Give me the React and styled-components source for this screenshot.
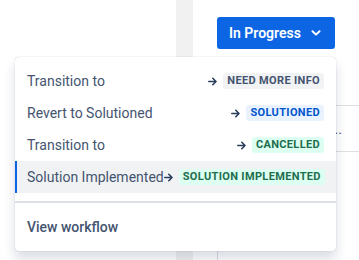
import React from "react";
import styled, { createGlobalStyle } from "styled-components";

const Global = createGlobalStyle`
  html, body { margin: 0; padding: 0; background: #ffffff; }
  body { font-family: Roboto, "Noto Sans", "Liberation Sans", sans-serif; -webkit-font-smoothing: antialiased; }
  * { box-sizing: border-box; }
`;

const Page = styled.div`
  position: relative;
  width: 359px;
  height: 260px;
  overflow: hidden;
  display: flex;
  background: #ffffff;
`;

const LeftPanel = styled.div`
  width: 176px;
  flex: none;
`;

const Gutter = styled.div`
  width: 17px;
  flex: none;
  background: #f1f1f1;
`;

const RightPanel = styled.div`
  flex: 1;
  display: flex;
  flex-direction: column;
  padding-top: 17px;
`;

const ButtonRow = styled.div`
  display: flex;
  padding-left: 24px;
  height: 32px;
`;

const StatusButton = styled.button`
  display: flex;
  align-items: center;
  justify-content: space-between;
  width: 118px;
  height: 32px;
  padding: 0 14px 0 12px;
  border: none;
  border-radius: 3px;
  background: #0c66e4;
  color: #ffffff;
  font-family: inherit;
  font-size: 14px;
  font-weight: 600;
  cursor: pointer;
`;

const InfoList = styled.div`
  margin-top: 56px;
  display: flex;
  flex-direction: column;
`;

const InfoRow = styled.div`
  height: 47px;
  border-top: 1px solid #dcdfe4;
  display: flex;
  align-items: center;
  justify-content: flex-end;
  padding-right: 17px;
  color: #44546f;
  font-size: 14px;
  &:last-child { border-bottom: 1px solid #dcdfe4; }
`;

const BottomStrip = styled.div`
  margin-top: auto;
  height: 10px;
  margin-left: 24px;
  border-left: 1px solid #dcdfe4;
`;

const Menu = styled.div`
  position: absolute;
  left: 15px;
  top: 57px;
  width: 321px;
  background: #ffffff;
  border-radius: 4px;
  box-shadow: 0 8px 12px rgba(9, 30, 66, 0.15), 0 0 1px rgba(9, 30, 66, 0.31);
  display: flex;
  flex-direction: column;
`;

const Section = styled.div`
  padding: 8px 0;
  & + & { border-top: 2px solid #dcdfe4; }
`;

const Item = styled.div`
  height: 32px;
  display: flex;
  align-items: center;
  justify-content: space-between;
  padding: 0 12px;
  color: #44546f;
  font-size: 14px;
  font-weight: ${(p) => (p.$bold ? 500 : 400)};
  background: ${(p) => (p.$active ? "#f1f2f4" : "transparent")};
  box-shadow: ${(p) => (p.$active ? "inset 2px 0 0 #0c66e4" : "none")};
  white-space: nowrap;
`;

const Target = styled.span`
  display: flex;
  align-items: center;
  gap: 6px;
`;

const tones = {
  neutral: { bg: "#f1f2f4", fg: "#44546f" },
  blue: { bg: "#e9f2ff", fg: "#0055cc" },
  green: { bg: "#dcfff1", fg: "#216e4e" },
};

const Lozenge = styled.span`
  display: inline-block;
  padding: 0 4px;
  height: 16px;
  line-height: 16px;
  border-radius: 3px;
  font-size: 11px;
  font-weight: 700;
  letter-spacing: 0.35px;
  text-transform: uppercase;
  background: ${(p) => tones[p.$tone].bg};
  color: ${(p) => tones[p.$tone].fg};
`;

const Arrow = () => (
  <svg width="9" height="9" viewBox="0 0 9 9" fill="none">
    <path d="M0.8 4.5H8M4.8 1.3L8 4.5L4.8 7.7" stroke="#2c3e5d" strokeWidth="1.6" strokeLinecap="round" strokeLinejoin="round" />
  </svg>
);

const Chevron = () => (
  <svg width="10" height="6" viewBox="0 0 10 6" fill="none">
    <path d="M1.5 1.2L5 4.6L8.5 1.2" stroke="#ffffff" strokeWidth="2" strokeLinecap="round" strokeLinejoin="round" />
  </svg>
);

const transitions = [
  { label: "Transition to", to: "Need more info", tone: "neutral" },
  { label: "Revert to Solutioned", to: "Solutioned", tone: "blue" },
  { label: "Transition to", to: "Cancelled", tone: "green" },
  { label: "Solution Implemented", to: "Solution implemented", tone: "green", active: true },
];

export default function App() {
  return (
    <>
      <Global />
      <Page>
        <LeftPanel />
        <Gutter />
        <RightPanel>
          <ButtonRow>
            <StatusButton>
              In Progress
              <Chevron />
            </StatusButton>
          </ButtonRow>
          <InfoList>
            <InfoRow>...</InfoRow>
          </InfoList>
          <BottomStrip />
        </RightPanel>
        <Menu>
          <Section>
            {transitions.map((t, i) => (
              <Item key={i} $active={t.active}>
                <span>{t.label}</span>
                <Target>
                  <Arrow />
                  <Lozenge $tone={t.tone}>{t.to}</Lozenge>
                </Target>
              </Item>
            ))}
          </Section>
          <Section>
            <Item $bold>View workflow</Item>
          </Section>
        </Menu>
      </Page>
    </>
  );
}
